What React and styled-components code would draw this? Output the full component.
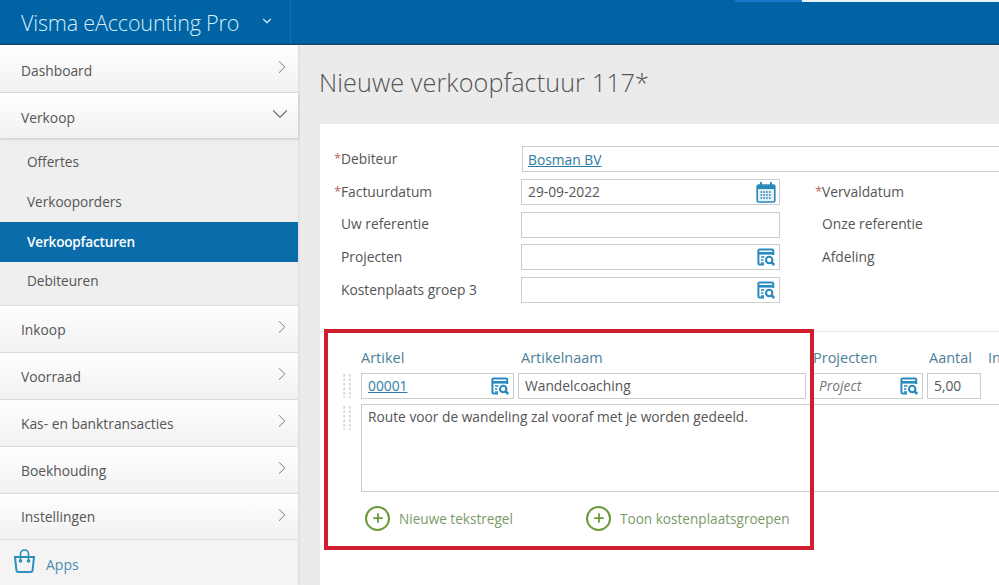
import React from "react";
import styled, { createGlobalStyle } from "styled-components";
import { ChevronDown, ChevronRight, Plus } from "lucide-react";

const Global = createGlobalStyle`
  html, body { margin: 0; padding: 0; height: 585px; overflow: hidden; background: #ebebeb; }
  * { box-sizing: border-box; }
  body { font-family: "Open Sans", "Liberation Sans", sans-serif; color: #555; }
`;

const Page = styled.div`
  width: 999px; height: 585px; display: flex; flex-direction: column; overflow: hidden;
`;
const Header = styled.header`
  height: 45px; flex: none; background: #0063a4; border-bottom: 1px solid #0b4a75;
  box-shadow: inset 0 -1px 0 #0a5284; display: flex; position: relative;
`;
const Brand = styled.div`
  width: 291px; display: flex; align-items: center; padding-left: 21px; gap: 21px;
  border-right: 1px solid #1a70a8; color: #d4eef9; font-size: 21.6px; font-weight: 300; letter-spacing: -0.2px;
  padding-top: 1px;
  svg { margin-top: -3px; }
`;
const TopTabs = styled.div`
  flex: 1; display: flex; justify-content: flex-end; align-items: flex-start;
`;
const TabLine = styled.div`
  height: 2px; width: ${(p) => p.$w}px; background: ${(p) => p.$c};
`;
const Body = styled.div`
  flex: 1; display: flex; min-height: 0;
`;
const Side = styled.nav`
  width: 298px; flex: none; background: #f4f4f4; display: flex; flex-direction: column;
  box-shadow: 1px 0 2px rgba(0,0,0,.08);
`;
const Item = styled.div`
  height: ${(p) => p.$h || 47}px; flex: none; display: flex; align-items: center; justify-content: space-between;
  padding: ${(p) => p.$pt || 0}px 5px 0 21px; font-size: 13.8px; color: #555;
  background: linear-gradient(#ffffff, #f1f1f1); border-bottom: 1px solid #dcdcdc;
  ${(p) => p.$open && "box-shadow: 0 1px 3px rgba(0,0,0,.18); border-bottom: none; position: relative;"}
  svg { color: #6f6f6f; margin-top: ${(p) => (p.$pt ? -6 : -4)}px; }
`;
const Sub = styled.div`
  background: #efefef; height: 168px; flex: none; padding-top: 5px; border-bottom: 1px solid #dedede;
`;
const SubItem = styled.div`
  height: 39.7px; display: flex; align-items: center; padding: 0 0 2px 27px; font-size: 13.6px;
  color: ${(p) => (p.$active ? "#fff" : "#555")};
  font-weight: ${(p) => (p.$active ? 600 : 400)};
  letter-spacing: ${(p) => (p.$active ? "-0.2px" : "0")};
  background: ${(p) => (p.$active ? "#0a6cab" : "transparent")};
`;
const AppsRow = styled.div`
  flex: 1; display: flex; align-items: center; gap: 10px; padding: 4px 0 0 13px; color: #4f8cb5; font-size: 14px;
  svg { margin-top: -6px; }
`;
const Main = styled.main`
  flex: 1; padding-left: 22px; min-width: 0; display: flex; flex-direction: column;
`;
const Title = styled.h1`
  height: 79px; margin: 0 0 0 -1px; flex: none; display: flex; align-items: center;
  font-size: 25.2px; font-weight: 300; color: #555; padding-bottom: 6px; letter-spacing: .1px;
`;
const Card = styled.section`
  flex: 1; background: #fff; position: relative; overflow: hidden; padding-top: 22px;
`;
const FormGrid = styled.div`
  display: grid; grid-template-columns: 187px 259px 35px 1fr; grid-auto-rows: 25.75px; row-gap: 7px;
  padding-left: 14px;
  width: 900px;
`;
const Label = styled.label`
  display: flex; align-items: center; font-size: 13.8px; color: #555; padding: 0 0 1px 7px;
  grid-column: ${(p) => p.$col || 1};
  position: relative;
`;
const Star = styled.span`
  position: absolute; left: 0; color: #b5645c; font-size: 13px;
`;
const Field = styled.div`
  border: 1px solid #ccc; background: #fff; height: 26px; display: flex; align-items: center;
  justify-content: space-between; padding: 0 3px 0 ${(p) => p.$pl || 6}px; font-size: 13.8px; color: #555;
  ${(p) => p.$span && "grid-column: 2 / -1; margin-left: 1px;"}
  ${(p) => p.$col && `grid-column: ${p.$col};`}
  margin-right: ${(p) => p.$mr || 0}px;
`;
const Link = styled.a`
  color: #2b7ba6; text-decoration: underline; font-size: 13.8px;
`;
const Lines = styled.div`
  margin-top: 28px; border-top: 1px solid #e6e6e6; padding-top: 14px; width: 760px;
`;
const LineGrid = styled.div`
  display: grid; grid-template-columns: 23px 18px 157px 294px 115px 61px 1fr; align-items: center;
`;
const HeadCell = styled.div`
  font-size: 14.5px; color: #4b7f99; height: 27px; line-height: 23px; padding-left: ${(p) => p.$pl || 0}px;
  white-space: nowrap; grid-column: ${(p) => p.$col};
`;
const Grip = styled.div`
  width: 9px; height: ${(p) => p.$h}px; grid-column: 2;
  background-image: radial-gradient(circle, #d8d8d8 1.1px, transparent 1.3px);
  background-size: 5.5px 4.5px;
  background-position: -1.5px 0;
`;
const Placeholder = styled.span`
  font-style: italic; color: #777;
`;
const TextRow = styled.div`
  display: grid; grid-template-columns: 23px 18px 1fr; margin-top: 5px; align-items: start;
`;
const TextBox = styled.div`
  grid-column: 3; height: 88px; border: 1px solid #ccc; border-right: none; padding: 2px 6px; font-size: 13.75px; color: #555;
`;
const GripTop = styled(Grip)`
  margin-top: 1px;
`;
const Actions = styled.div`
  display: grid; grid-template-columns: 221px auto; justify-content: start; padding: 14px 0 0 45px;
`;
const Action = styled.div`
  display: flex; align-items: center; gap: 9px; font-size: 13.6px; color: #7b9a68; white-space: nowrap;
`;
const PlusCircle = styled.span`
  width: 25px; height: 25px; border-radius: 50%; border: 2px solid #6a9838; display: flex; align-items: center;
  justify-content: center; color: #6a9838; flex: none;
`;
const Highlight = styled.div`
  position: absolute; left: 4px; top: 205px; width: 490px; height: 221px; border: 4.5px solid #cf1f2e; pointer-events: none;
`;

const LookupIcon = () => (
  <svg width="20" height="20" viewBox="0 0 20 20" fill="none" stroke="#2a8abf" strokeWidth="2">
    <path d="M8 17.5H3.6a1.2 1.2 0 0 1-1.2-1.2V3.6a1.2 1.2 0 0 1 1.2-1.2h12.4a1.2 1.2 0 0 1 1.2 1.2V8" />
    <path d="M2.4 6.3h14.8" strokeWidth="2.6" />
    <path d="M5 10h3.4M5 13h2.4M5 16h3" strokeWidth="1.6" />
    <circle cx="13.2" cy="13" r="3.2" strokeWidth="2.1" />
    <path d="M15.6 15.4l2.6 2.6" strokeWidth="2.6" />
  </svg>
);
const CalendarIcon = () => (
  <svg width="20" height="22" viewBox="0 0 20 22" fill="none">
    <rect x="1.2" y="4" width="17.6" height="17" rx="1.2" fill="#e4f1f8" stroke="#2a86b8" strokeWidth="1.6" />
    <path d="M1.5 4.5h17v3.6h-17z" fill="#2a86b8" />
    <path d="M5 1v5M15 1v5" stroke="#2a86b8" strokeWidth="1.8" />
    <path d="M4.5 11h11M4.5 14h11M4.5 17h11" stroke="#2a7fb0" strokeWidth="1.7" strokeDasharray="1.7 1.1" />
  </svg>
);
const BagIcon = () => (
  <svg width="23" height="25" viewBox="0 0 23 25" fill="none" stroke="#2a90bd" strokeWidth="2">
    <path d="M2 8h19l-1.4 13a2 2 0 0 1-2 2H5.4a2 2 0 0 1-2-2z" />
    <path d="M7.5 12V5a4 4 0 0 1 8 0v7" strokeWidth="1.6" />
    <circle cx="7.5" cy="12" r=".8" />
    <circle cx="15.5" cy="12" r=".8" />
  </svg>
);

const Chev = () => <ChevronRight size={22} strokeWidth={1} />;

export default function App() {
  return (
    <Page>
      <Global />
      <Header>
        <Brand>
          Visma eAccounting Pro
          <ChevronDown size={14} strokeWidth={2} />
        </Brand>
        <TopTabs>
          <TabLine $w={67} $c="#1a78c8" />
          <TabLine $w={197} $c="#e6f2fa" />
        </TopTabs>
      </Header>
      <Body>
        <Side>
          <Item $h={48} $pt={3}>Dashboard<Chev /></Item>
          <Item $open $h={45} $pt={3}>Verkoop<ChevronDown size={26} strokeWidth={1} /></Item>
          <Sub>
            <SubItem>Offertes</SubItem>
            <SubItem>Verkooporders</SubItem>
            <SubItem $active>Verkoopfacturen</SubItem>
            <SubItem>Debiteuren</SubItem>
          </Sub>
          <Item>Inkoop<Chev /></Item>
          <Item>Voorraad<Chev /></Item>
          <Item>Kas- en banktransacties<Chev /></Item>
          <Item>Boekhouding<Chev /></Item>
          <Item $h={46}>Instellingen<Chev /></Item>
          <AppsRow><BagIcon />Apps</AppsRow>
        </Side>
        <Main>
          <Title>Nieuwe verkoopfactuur 117*</Title>
          <Card>
            <FormGrid>
              <Label><Star>*</Star>Debiteur</Label>
              <Field $span $pl={5}><Link>Bosman BV</Link></Field>
              <Label><Star>*</Star>Factuurdatum</Label>
              <Field>29-09-2022<CalendarIcon /></Field>
              <Label $col={4}><Star>*</Star>Vervaldatum</Label>
              <Label>Uw referentie</Label>
              <Field />
              <Label $col={4}>Onze referentie</Label>
              <Label>Projecten</Label>
              <Field><span /><LookupIcon /></Field>
              <Label $col={4}>Afdeling</Label>
              <Label>Kostenplaats groep 3</Label>
              <Field><span /><LookupIcon /></Field>
            </FormGrid>
            <Lines>
              <LineGrid>
                <HeadCell $col={3}>Artikel</HeadCell>
                <HeadCell $col={4} $pl={3}>Artikelnaam</HeadCell>
                <HeadCell $col={5} $pl={1}>Projecten</HeadCell>
                <HeadCell $col={6} $pl={2}>Aantal</HeadCell>
                <HeadCell $col={7}>In</HeadCell>
                <Grip $h={25} />
                <Field $col={3} $mr={4}><Link>00001</Link><LookupIcon /></Field>
                <Field $col={4} $mr={6}>Wandelcoaching</Field>
                <Field $col={5} $mr={4}><Placeholder>Project</Placeholder><LookupIcon /></Field>
                <Field $col={6} $mr={7}>5,00</Field>
              </LineGrid>
              <TextRow>
                <GripTop $h={25} />
                <TextBox>Route voor de wandeling zal vooraf met je worden gedeeld.</TextBox>
              </TextRow>
              <Actions>
                <Action><PlusCircle><Plus size={14} strokeWidth={3} /></PlusCircle>Nieuwe tekstregel</Action>
                <Action><PlusCircle><Plus size={14} strokeWidth={3} /></PlusCircle>Toon kostenplaatsgroepen</Action>
              </Actions>
            </Lines>
            <Highlight />
          </Card>
        </Main>
      </Body>
    </Page>
  );
}
